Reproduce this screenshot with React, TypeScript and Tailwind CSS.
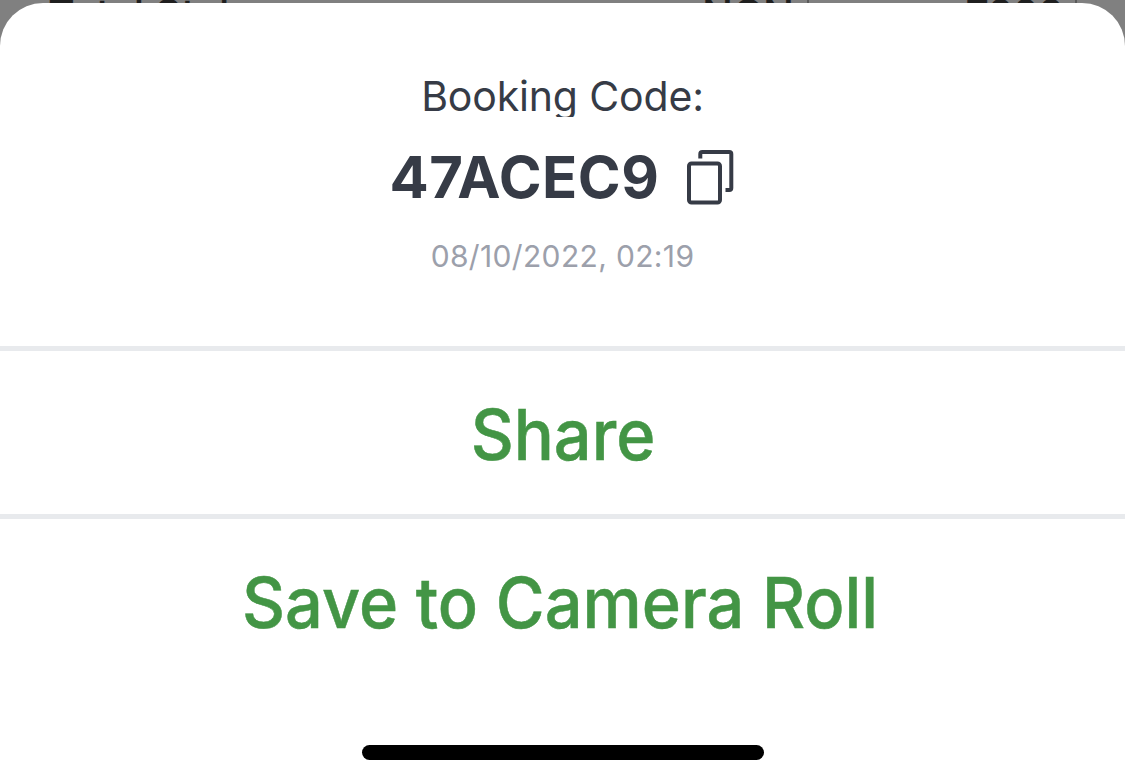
const summary = [
  { label: "Total Stake", className: "ml-[48px] w-[654px]" },
  { label: "NGN", className: "w-[105px] tracking-[-0.3px]" },
  { label: "7000", className: "w-[268px] border-l-2 border-[#5a5a5a] pr-[12px] text-right tracking-[-1.2px]" },
];

const actions = [
  { label: "Share", className: "h-[168px] pt-[4px]" },
  { label: "Save to Camera Roll", className: "h-[172px] pt-px pr-[4px]" },
];

function CopyIcon() {
  return (
    <svg
      width="50"
      height="56"
      viewBox="0 0 50 56"
      fill="none"
      stroke="#363b46"
      strokeWidth="4"
      strokeLinejoin="round"
      aria-hidden="true"
    >
      <rect x="2" y="14.5" width="31" height="39" rx="2.5" />
      <path d="M13.3 9.5V5Q13.3 3 15.3 3H42.3Q44.3 3 44.3 5V39Q44.3 41 42.3 41H38.5" />
    </svg>
  );
}

export default function App() {
  return (
    <div
      className="flex h-[784px] w-[1125px] flex-col overflow-hidden bg-[#808080]"
      style={{ fontFamily: 'Inter, "Liberation Sans", sans-serif' }}
    >
      {/* Bet slip row left visible behind the sheet */}
      <div className="flex h-[3px] shrink-0 overflow-hidden text-[#1f1f1f]">
        {summary.map((item) => (
          <div key={item.label} className={`h-[60px] shrink-0 ${item.className}`}>
            <div className="-mt-[6px] text-[41px] leading-none font-medium">
              {item.label}
            </div>
          </div>
        ))}
        <div className="h-[60px] w-[2px] shrink-0 bg-[#5a5a5a]" />
      </div>

      {/* Bottom sheet */}
      <div className="flex flex-1 flex-col items-center rounded-t-[43px] bg-white">
        <div className="flex h-[343px] flex-col items-center pt-[72px] text-[#363b46]">
          <p className="h-[42px] overflow-hidden text-[41px] leading-[42px] tracking-[-0.15px] whitespace-nowrap">
            Booking Code:
          </p>
          <div className="mt-[31px] flex h-[58px] items-center gap-[28px]">
            <h1 className="text-[58px] leading-none font-bold tracking-[0.5px]">47ACEC9</h1>
            <button type="button" aria-label="Copy booking code" className="-mr-[2px]">
              <CopyIcon />
            </button>
          </div>
          <p className="mt-[35px] text-[30px] leading-[31px] tracking-[0.35px] whitespace-nowrap text-[#9ca0ab]">
            08/10/2022, 02:19
          </p>
        </div>

        {actions.map((action) => (
          <button
            key={action.label}
            type="button"
            className={`w-full border-t-[5px] border-[#e8eaed] text-[70px] leading-none font-medium text-[#439545] ${action.className}`}
          >
            <span className="inline-block scale-x-[0.952] whitespace-nowrap [-webkit-text-stroke:0.5px]">
              {action.label}
            </span>
          </button>
        ))}

        {/* Home indicator */}
        <div className="mt-[59px] h-[15px] w-[402px] rounded-full bg-black" />
      </div>
    </div>
  );
}
